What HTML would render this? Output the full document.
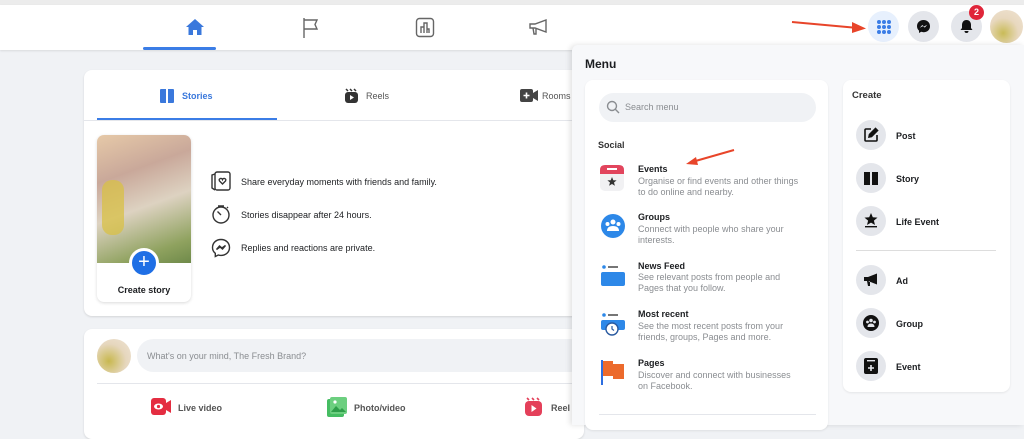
<!DOCTYPE html>
<html><head><meta charset="utf-8"><style>
*{margin:0;padding:0;box-sizing:border-box}
body{width:1024px;height:425px;overflow:hidden;background:#f0f2f5;font-family:"Liberation Sans",sans-serif;color:#1c1e21;position:relative}
.a{position:absolute}
.t{font-size:9px;color:#1c1e21}
.g{font-size:9px;color:#8a8d91;line-height:11px}
.b{font-weight:bold}
.circ{position:absolute;border-radius:50%;background:#e4e6eb}
</style></head><body>
<!-- top strip -->
<div class="a" style="left:0;top:0;width:1024px;height:5px;background:#ececec"></div>
<div class="a" style="left:0;top:5px;width:1024px;height:45px;background:#fff;box-shadow:0 1px 2px rgba(0,0,0,.1)"></div>
<div class="a" style="left:143px;top:47px;width:73px;height:3px;background:#3b7de6;border-radius:2px"></div>
<!-- home -->
<svg class="a" style="left:185px;top:18px" width="20" height="18" viewBox="0 0 20 18"><path d="M10 1 L19 9 H16.5 V17 H12 V12 H8 V17 H3.5 V9 H1 Z" fill="#3a78dc"/></svg>
<svg class="a" style="left:302px;top:17px" width="18" height="22" viewBox="0 0 18 22" fill="none" stroke="#666" stroke-width="1.4"><path d="M2 1 V21 M2 3 H15 L13 7.5 L15 12 H2"/></svg>
<svg class="a" style="left:415px;top:17px" width="20" height="21" viewBox="0 0 20 21" fill="none" stroke="#666" stroke-width="1.4"><rect x="1.5" y="1.5" width="17" height="18" rx="3"/><path d="M6 16 V10 H9 V16 M9 16 V6 H12 V16 M12 16 V12 H14 V16"/></svg>
<svg class="a" style="left:528px;top:18px" width="22" height="18" viewBox="0 0 22 18" fill="none" stroke="#666" stroke-width="1.4"><path d="M2 6 H7 L18 2 V14 L7 10 H2 Z M5 10 L6 16 H8 L8 10"/></svg>
<!-- right buttons -->
<svg class="a" style="left:790px;top:18px" width="80" height="18"><line x1="2" y1="4" x2="68" y2="10" stroke="#e8452a" stroke-width="2"/><path d="M62 4 L76 10.5 L62 15 Z" fill="#e8452a"/></svg>
<div class="circ" style="left:868px;top:11px;width:31px;height:31px;background:#e7f0fd"></div>
<svg class="a" style="left:876px;top:19px" width="16" height="16"><g fill="#3b7de6"><circle cx="3" cy="3" r="2"/><circle cx="8" cy="3" r="2"/><circle cx="13" cy="3" r="2"/><circle cx="3" cy="8" r="2"/><circle cx="8" cy="8" r="2"/><circle cx="13" cy="8" r="2"/><circle cx="3" cy="13" r="2"/><circle cx="8" cy="13" r="2"/><circle cx="13" cy="13" r="2"/></g></svg>
<div class="circ" style="left:908px;top:11px;width:31px;height:31px"></div>
<svg class="a" style="left:916px;top:19px" width="15" height="15" viewBox="0 0 15 15"><path d="M7.5 1 C3.5 1 1 3.8 1 7.2 C1 9 1.8 10.6 3 11.6 V14 L5.2 12.8 C5.9 13 6.7 13.2 7.5 13.2 C11.5 13.2 14 10.5 14 7.2 C14 3.8 11.5 1 7.5 1Z" fill="#111"/><path d="M3.8 8.8 L6.3 6 L8 7.5 L11.2 5.8 L8.8 8.6 L7 7.1 Z" fill="#e4e6eb"/></svg>
<div class="circ" style="left:951px;top:11px;width:31px;height:31px"></div>
<svg class="a" style="left:959px;top:19px" width="15" height="15" viewBox="0 0 15 15"><path d="M7.5 1 C4.5 1 3 3.3 3 6 V9 L1.5 11 H13.5 L12 9 V6 C12 3.3 10.5 1 7.5 1Z M5.5 12 A2 2 0 0 0 9.5 12Z" fill="#111"/></svg>
<div class="a" style="left:969px;top:5px;width:15px;height:15px;border-radius:50%;background:#e0263a;color:#fff;font-size:9px;text-align:center;line-height:15px;font-weight:bold">2</div>
<div class="a" style="left:990px;top:10px;width:33px;height:33px;border-radius:50%;background:radial-gradient(circle at 40% 70%,#c9bb57,#e8d8bf 50%,#efe3d3)"></div>

<!-- stories card -->
<div class="a" style="left:84px;top:70px;width:500px;height:246px;background:#fff;border-radius:8px;box-shadow:0 1px 2px rgba(0,0,0,.12)"></div>
<div class="a" style="left:84px;top:120px;width:500px;height:1px;background:#e4e6eb"></div>
<div class="a" style="left:97px;top:118px;width:180px;height:2px;background:#3b7de6"></div>
<svg class="a" style="left:159px;top:88px" width="16" height="16" viewBox="0 0 16 16"><path d="M1 2 Q1 1 2 1 H7 V15 H2 Q1 15 1 14Z M9 1 H14 Q15 1 15 2 V14 Q15 15 14 15 H9Z" fill="#3a78dc"/></svg>
<div class="a b" style="left:182px;top:91px;font-size:9px;color:#3a78dc">Stories</div>
<svg class="a" style="left:344px;top:88px" width="15" height="16" viewBox="0 0 15 16"><rect x="1" y="4" width="13" height="11" rx="3" fill="#333"/><path d="M2 1 L4 3 M6 1 L8 3 M10 1 L12 3" stroke="#333" stroke-width="1.5"/><path d="M6 7 L10 9.5 L6 12Z" fill="#fff"/></svg>
<div class="a t" style="left:366px;top:91px;color:#555">Reels</div>
<svg class="a" style="left:520px;top:89px" width="18" height="13" viewBox="0 0 18 13"><rect x="0" y="0" width="13" height="13" rx="2" fill="#444"/><path d="M13 4 L18 1 V12 L13 9Z" fill="#444"/><path d="M6.5 3.5 V9.5 M3.5 6.5 H9.5" stroke="#fff" stroke-width="1.6"/></svg>
<div class="a t" style="left:542px;top:91px;color:#555">Rooms</div>
<!-- create story -->
<div class="a" style="left:97px;top:135px;width:94px;height:167px;border-radius:7px;background:#fff;box-shadow:0 1px 3px rgba(0,0,0,.15);overflow:hidden">
<div style="width:94px;height:128px;background:linear-gradient(160deg,#e6c9a8 0%,#c9a89a 30%,#ddd2c1 55%,#8fa25f 85%,#6f8a4a 100%)"></div>
<div style="position:absolute;left:5px;top:45px;width:22px;height:55px;border-radius:10px;background:#d8c046;opacity:.75"></div>
</div>
<div class="a" style="left:129px;top:248px;width:30px;height:30px;border-radius:50%;background:#1f6fe5;border:3px solid #fff;color:#fff;text-align:center;font-size:20px;line-height:22px">+</div>
<div class="a b" style="left:97px;top:285px;width:94px;text-align:center;font-size:9px">Create story</div>
<svg class="a" style="left:210px;top:171px" width="22" height="20" viewBox="0 0 22 20" fill="none" stroke="#333" stroke-width="1.4"><rect x="5" y="1" width="15" height="18" rx="2"/><path d="M5 3 L2 4 V17 L5 19"/><path d="M12.5 13 L9.5 10 Q8.5 8 10.5 7.5 Q12 7.3 12.5 8.5 Q13 7.3 14.5 7.5 Q16.5 8 15.5 10Z"/></svg>
<div class="a t" style="left:241px;top:177px">Share everyday moments with friends and family.</div>
<svg class="a" style="left:211px;top:204px" width="20" height="20" viewBox="0 0 20 20" fill="none" stroke="#333" stroke-width="1.4"><circle cx="10" cy="11" r="8"/><path d="M7 2 H13 M10 11 L6.5 7.5 M16 4 L17 3"/></svg>
<div class="a t" style="left:241px;top:210px">Stories disappear after 24 hours.</div>
<svg class="a" style="left:211px;top:238px" width="20" height="20" viewBox="0 0 20 20" fill="none" stroke="#333" stroke-width="1.4"><path d="M10 1.5 C5 1.5 1.5 5 1.5 9.5 C1.5 12 2.6 14 4.3 15.3 V18.5 L7.3 17 C8.1 17.3 9 17.4 10 17.4 C15 17.4 18.5 14 18.5 9.5 C18.5 5 15 1.5 10 1.5Z"/><path d="M5.5 11.5 L8.5 8 L11 10 L14.5 7.5 L11.5 11 L9 9Z" fill="#333"/></svg>
<div class="a t" style="left:241px;top:243px">Replies and reactions are private.</div>

<!-- post card -->
<div class="a" style="left:84px;top:329px;width:500px;height:110px;background:#fff;border-radius:8px;box-shadow:0 1px 2px rgba(0,0,0,.12)"></div>
<div class="a" style="left:97px;top:339px;width:34px;height:34px;border-radius:50%;background:radial-gradient(circle at 35% 65%,#c8b84f,#e6d7be 55%,#efe4d5)"></div>
<div class="a" style="left:137px;top:339px;width:450px;height:33px;border-radius:17px;background:#f0f2f5"></div>
<div class="a g" style="left:147px;top:351px;font-size:9px">What's on your mind, The Fresh Brand?</div>
<div class="a" style="left:97px;top:383px;width:480px;height:1px;background:#e4e6eb"></div>
<svg class="a" style="left:151px;top:398px" width="21" height="17" viewBox="0 0 21 17"><rect x="0" y="0" width="15" height="17" rx="3" fill="#e42d41"/><path d="M15 5 L20 2 V15 L15 12Z" fill="#e42d41"/><ellipse cx="7.5" cy="8.5" rx="4.5" ry="3" fill="#fff"/><circle cx="7.5" cy="8.5" r="1.6" fill="#e42d41"/></svg>
<div class="a t" style="left:178px;top:403px;color:#555;font-weight:bold">Live video</div>
<svg class="a" style="left:327px;top:397px" width="20" height="20" viewBox="0 0 20 20"><rect x="0" y="2" width="17" height="18" rx="2" fill="#45bd62"/><rect x="3" y="0" width="17" height="17" rx="2" fill="#6ccf7f"/><path d="M4 15 L9 9 L13 13 L15 11 L19 15Z" fill="#2f9e4a"/><circle cx="8" cy="5" r="1.6" fill="#fff"/></svg>
<div class="a t" style="left:354px;top:403px;color:#555;font-weight:bold">Photo/video</div>
<svg class="a" style="left:525px;top:397px" width="17" height="19" viewBox="0 0 17 19"><rect x="0" y="4" width="17" height="15" rx="4" fill="#e4405a"/><path d="M2 1 L4 3 M7 1 L9 3 M12 1 L14 3" stroke="#e4405a" stroke-width="1.6"/><path d="M6.5 8 L11.5 11.5 L6.5 15Z" fill="#fff"/></svg>
<div class="a t" style="left:551px;top:403px;color:#555;font-weight:bold">Reel</div>

<!-- menu panel -->
<div class="a" style="left:572px;top:45px;width:452px;height:380px;background:#f7f8fa;box-shadow:-2px 0 6px rgba(0,0,0,.12);border-top-left-radius:6px"></div>
<div class="a b" style="left:585px;top:57px;font-size:12px">Menu</div>
<div class="a" style="left:585px;top:80px;width:243px;height:350px;background:#fff;border-radius:8px;box-shadow:0 1px 2px rgba(0,0,0,.08)"></div>
<div class="a" style="left:599px;top:93px;width:217px;height:29px;border-radius:15px;background:#f0f2f5"></div>
<svg class="a" style="left:606px;top:100px" width="14" height="14" viewBox="0 0 14 14" fill="none" stroke="#8a8d91" stroke-width="1.4"><circle cx="6" cy="6" r="4.5"/><path d="M9.3 9.3 L13 13"/></svg>
<div class="a g" style="left:625px;top:102px">Search menu</div>
<div class="a b" style="left:598px;top:140px;font-size:9px;color:#333">Social</div>
<svg class="a" style="left:672px;top:148px" width="64" height="20"><line x1="62" y1="2" x2="20" y2="14" stroke="#e8452a" stroke-width="2"/><path d="M14 16 L24 9 L26 17 Z" fill="#e8452a"/></svg>
<!-- events -->
<svg class="a" style="left:600px;top:165px" width="24" height="26" viewBox="0 0 24 26"><rect x="0" y="0" width="24" height="26" rx="5" fill="#f1f1f3"/><path d="M0 5 Q0 0 5 0 H19 Q24 0 24 5 V9 H0Z" fill="#e2455d"/><rect x="7" y="3" width="10" height="2" fill="#fff"/><path d="M12 12 L13.3 15.2 L16.6 15.4 L14 17.5 L14.9 20.8 L12 19 L9.1 20.8 L10 17.5 L7.4 15.4 L10.7 15.2Z" fill="#333"/></svg>
<div class="a b t" style="left:638px;top:164px">Events</div>
<div class="a g" style="left:638px;top:176px">Organise or find events and other things<br>to do online and nearby.</div>
<!-- groups -->
<svg class="a" style="left:601px;top:214px" width="24" height="24" viewBox="0 0 24 24"><circle cx="12" cy="12" r="12" fill="#2d88e8"/><circle cx="12" cy="8" r="2.5" fill="#fff"/><circle cx="6.5" cy="10" r="2" fill="#fff"/><circle cx="17.5" cy="10" r="2" fill="#fff"/><path d="M6 17 Q6 12 12 12 Q18 12 18 17Z" fill="#fff"/></svg>
<div class="a b t" style="left:638px;top:212px">Groups</div>
<div class="a g" style="left:638px;top:224px">Connect with people who share your<br>interests.</div>
<!-- news feed -->
<svg class="a" style="left:601px;top:265px" width="24" height="21" viewBox="0 0 24 21"><circle cx="3" cy="2" r="1.8" fill="#2d88e8"/><rect x="7" y="1.2" width="10" height="1.6" fill="#555"/><rect x="0" y="7" width="24" height="14" rx="2" fill="#2d88e8"/></svg>
<div class="a b t" style="left:638px;top:261px">News Feed</div>
<div class="a g" style="left:638px;top:272px">See relevant posts from people and<br>Pages that you follow.</div>
<!-- most recent -->
<svg class="a" style="left:601px;top:313px" width="24" height="24" viewBox="0 0 24 24"><circle cx="3" cy="2" r="1.8" fill="#2d88e8"/><rect x="7" y="1.2" width="10" height="1.6" fill="#555"/><rect x="0" y="7" width="24" height="10" rx="2" fill="#2d88e8"/><circle cx="11" cy="16" r="6" fill="#fff" stroke="#2a5aa0" stroke-width="1.4"/><path d="M11 13 V16 L13 17.5" stroke="#2a5aa0" stroke-width="1.2" fill="none"/></svg>
<div class="a b t" style="left:638px;top:309px">Most recent</div>
<div class="a g" style="left:638px;top:321px">See the most recent posts from your<br>friends, groups, Pages and more.</div>
<!-- pages -->
<svg class="a" style="left:601px;top:360px" width="24" height="25" viewBox="0 0 24 25"><rect x="0" y="0" width="2" height="25" fill="#2d6ee0"/><path d="M2 1 H12 V4 H23 V19 H12 V16 H2Z" fill="#ec6a2c"/></svg>
<div class="a b t" style="left:638px;top:358px">Pages</div>
<div class="a g" style="left:638px;top:370px">Discover and connect with businesses<br>on Facebook.</div>
<div class="a" style="left:599px;top:414px;width:217px;height:1px;background:#e4e6eb"></div>

<!-- create card -->
<div class="a" style="left:843px;top:80px;width:167px;height:312px;background:#fff;border-radius:8px;box-shadow:0 1px 2px rgba(0,0,0,.08)"></div>
<div class="a b" style="left:852px;top:90px;font-size:9.5px;color:#333">Create</div>
<div class="circ" style="left:856px;top:120px;width:30px;height:30px"></div>
<svg class="a" style="left:863px;top:127px" width="16" height="16" viewBox="0 0 16 16" fill="none" stroke="#111" stroke-width="1.6"><path d="M8 2 H3 Q2 2 2 3 V13 Q2 14 3 14 H13 Q14 14 14 13 V8"/><path d="M6 10 L6.5 7.5 L12.5 1.5 L14.5 3.5 L8.5 9.5Z" fill="#111"/></svg>
<div class="a b t" style="left:896px;top:131px">Post</div>
<div class="circ" style="left:856px;top:163px;width:30px;height:30px"></div>
<svg class="a" style="left:864px;top:171px" width="14" height="14" viewBox="0 0 14 14"><path d="M0 1 H6 V14 H0Z M8 1 H14 V14 H8Z" fill="#111"/></svg>
<div class="a b t" style="left:896px;top:174px">Story</div>
<div class="circ" style="left:856px;top:206px;width:30px;height:30px"></div>
<svg class="a" style="left:863px;top:212px" width="16" height="16" viewBox="0 0 16 16"><path d="M8 1 L9.8 5.3 L14.5 5.6 L10.9 8.6 L12 13 L8 10.6 L4 13 L5.1 8.6 L1.5 5.6 L6.2 5.3Z" fill="#111"/><rect x="2" y="14" width="12" height="1.4" fill="#111"/></svg>
<div class="a b t" style="left:896px;top:217px">Life Event</div>
<div class="a" style="left:856px;top:250px;width:140px;height:1px;background:#ddd"></div>
<div class="circ" style="left:856px;top:265px;width:30px;height:30px"></div>
<svg class="a" style="left:863px;top:273px" width="16" height="14" viewBox="0 0 16 14"><path d="M1 4 H5 L14 0.5 V11.5 L5 8 H1Z M4 8 L5 13 H7 L7 8" fill="#111"/></svg>
<div class="a b t" style="left:896px;top:276px">Ad</div>
<div class="circ" style="left:856px;top:308px;width:30px;height:30px"></div>
<svg class="a" style="left:863px;top:315px" width="16" height="16" viewBox="0 0 16 16"><circle cx="8" cy="8" r="8" fill="#111"/><circle cx="8" cy="5.5" r="1.8" fill="#e4e6eb"/><circle cx="4.5" cy="7" r="1.4" fill="#e4e6eb"/><circle cx="11.5" cy="7" r="1.4" fill="#e4e6eb"/><path d="M4.5 12 Q4.5 8.5 8 8.5 Q11.5 8.5 11.5 12Z" fill="#e4e6eb"/></svg>
<div class="a b t" style="left:896px;top:319px">Group</div>
<div class="circ" style="left:856px;top:351px;width:30px;height:30px"></div>
<svg class="a" style="left:864px;top:358px" width="14" height="16" viewBox="0 0 14 16"><rect x="0" y="0" width="14" height="16" rx="2" fill="#111"/><rect x="3" y="2" width="8" height="1.4" fill="#e4e6eb"/><path d="M7 7 V13 M4 10 H10" stroke="#e4e6eb" stroke-width="1.6"/></svg>
<div class="a b t" style="left:896px;top:362px">Event</div>
</body></html>
